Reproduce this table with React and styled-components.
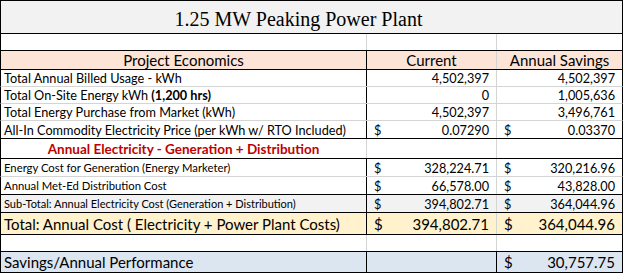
import React from 'react';
import styled, { createGlobalStyle } from 'styled-components';

const GlobalStyle = createGlobalStyle`
  html, body { margin: 0; padding: 0; background: #ffffff; }
  * { box-sizing: border-box; }
`;

const Sheet = styled.div`
  width: 623px;
  font-family: Lato, "Liberation Sans", sans-serif;
  color: #000;
`;

const TitleBar = styled.div`
  height: 34px;
  border: 1px solid #000;
  background: #f2f2f2;
  display: flex;
  align-items: center;
  justify-content: center;
  padding: 4px 26px 0 0;
  font-family: "Liberation Serif", serif;
  font-size: 20px;
`;

const Row = styled.div`
  display: grid;
  grid-template-columns: 365px 130px 1fr;
  height: ${(p) => p.$h || 17}px;
  background: ${(p) => p.$bg || '#ffffff'};
  border-left: 1px solid #000;
  border-right: 1px solid #000;
  border-bottom: 1px solid ${(p) => p.$line || '#d4d4d4'};
  font-size: ${(p) => p.$size || 12.7}px;
`;

const Cell = styled.div`
  display: flex;
  align-items: center;
  justify-content: ${(p) => (p.$center ? 'center' : p.$right ? 'flex-end' : 'flex-start')};
  padding: 0 ${(p) => (p.$right ? 7 : 3)}px 0 ${(p) => (p.$right ? 7 : 3)}px;
  border-left: ${(p) => (p.$div ? `1px solid ${p.$div}` : 'none')};
  white-space: pre;
  overflow: hidden;
  font-size: ${(p) => (p.$fs ? `${p.$fs}px` : 'inherit')};
  font-weight: ${(p) => (p.$bold ? 700 : 400)};
  color: ${(p) => p.$color || 'inherit'};
`;

const Money = styled(Cell)`
  justify-content: space-between;
  padding: 0 7px 0 7px;
`;

const Strong = styled.b`
  font-weight: 700;
`;

const BLACK = '#000';
const GRID = '#d4d4d4';

const MoneyCell = ({ value, div, fs }) => (
  <Money $div={div} $fs={fs}>
    <span>$</span>
    <span>{value}</span>
  </Money>
);

const usage = [
  { label: 'Total Annual Billed Usage - kWh', cur: '4,502,397', sav: '4,502,397' },
  { label: <span>Total On-Site Energy kWh <Strong>(1,200 hrs)</Strong></span>, cur: '0', sav: '1,005,636' },
  { label: 'Total Energy Purchase from Market (kWh)', cur: '4,502,397', sav: '3,496,761' },
];

const App = () => (
  <>
    <GlobalStyle />
    <Sheet>
      <TitleBar>1.25 MW Peaking Power Plant</TitleBar>

      <Row $h={17} $line={BLACK}>
        <Cell />
        <Cell $div={GRID} />
        <Cell $div={GRID} />
      </Row>

      <Row $h={19} $bg="#fce4d6" $line={BLACK} $size={15}>
        <Cell $center>Project Economics</Cell>
        <Cell $center $div={BLACK}>Current</Cell>
        <Cell $center $div={GRID}>Annual Savings</Cell>
      </Row>

      {usage.map((r, i) => (
        <Row key={i} $h={17}>
          <Cell>{r.label}</Cell>
          <Cell $right $div={BLACK}>{r.cur}</Cell>
          <Cell $right $div={GRID}>{r.sav}</Cell>
        </Row>
      ))}

      <Row $h={18} $line={BLACK}>
        <Cell>All-In Commodity Electricity Price (per kWh w/ RTO Included)</Cell>
        <MoneyCell value="0.07290" div={BLACK} />
        <MoneyCell value="0.03370" div={GRID} />
      </Row>

      <Row $h={20} $line={BLACK} $size={13.5}>
        <Cell $center $bold $color="#c00000">Annual Electricity - Generation + Distribution</Cell>
        <Cell $div={GRID} />
        <Cell $div={GRID} />
      </Row>

      <Row $h={18} $size={11.3}>
        <Cell>Energy Cost for Generation (Energy Marketer)</Cell>
        <MoneyCell value="328,224.71" div={BLACK} fs={12.7} />
        <MoneyCell value="320,216.96" div={GRID} fs={12.7} />
      </Row>

      <Row $h={18} $line={BLACK} $size={11.3}>
        <Cell>Annual Met-Ed Distribution Cost</Cell>
        <MoneyCell value="66,578.00" div={BLACK} fs={12.7} />
        <MoneyCell value="43,828.00" div={GRID} fs={12.7} />
      </Row>

      <Row $h={18} $bg="#f2f2f2" $line={BLACK} $size={11}>
        <Cell>Sub-Total: Annual Electricity Cost (Generation + Distribution)</Cell>
        <MoneyCell value="394,802.71" div={BLACK} fs={12.7} />
        <MoneyCell value="364,044.96" div={GRID} fs={12.7} />
      </Row>

      <Row $h={22} $bg="#fff2cc" $line={BLACK} $size={15}>
        <Cell>Total: Annual Cost ( Electricity + Power Plant Costs)</Cell>
        <MoneyCell value="394,802.71" div={BLACK} />
        <MoneyCell value="364,044.96" div={GRID} />
      </Row>

      <Row $h={17} $line={BLACK}>
        <Cell />
        <Cell $div={GRID} />
        <Cell $div={GRID} />
      </Row>

      <Row $h={21} $bg="#dce6f1" $line={BLACK} $size={15}>
        <Cell>Savings/Annual Performance</Cell>
        <Cell $div={BLACK} />
        <MoneyCell value="30,757.75" div={BLACK} />
      </Row>
    </Sheet>
  </>
);

export default App;
